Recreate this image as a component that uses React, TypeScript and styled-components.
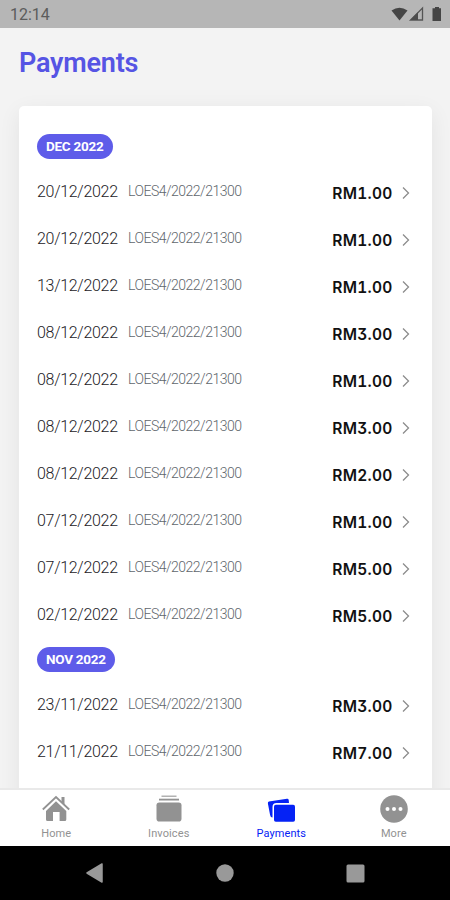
import React from "react";
import styled, { createGlobalStyle } from "styled-components";

const Global = createGlobalStyle`
  * { box-sizing: border-box; }
  body { margin: 0; font-family: Roboto, "Liberation Sans", sans-serif; }
`;

const Screen = styled.div`
  width: 450px;
  height: 900px;
  display: flex;
  flex-direction: column;
  overflow: hidden;
  background: #f3f3f3;
`;

const StatusBar = styled.header`
  flex: none;
  height: 28px;
  padding: 1px 7px 0 10px;
  display: flex;
  align-items: center;
  justify-content: space-between;
  background: #b6b6b6;
  color: #5c5c5c;
  font-size: 16px;
`;

const Content = styled.main`
  flex: 1;
  min-height: 0;
  display: flex;
  flex-direction: column;
  padding: 0 18px 0 19px;
  overflow: hidden;
`;

const Title = styled.h1`
  flex: none;
  margin: 0;
  height: 78px;
  padding-top: 19px;
  font-size: 27px;
  line-height: 32px;
  font-weight: 600;
  letter-spacing: -0.2px;
  color: #5654e4;
`;

const Card = styled.section`
  flex: none;
  height: 720px;
  padding: 19px 18px 0;
  background: #fff;
  border-radius: 5px 5px 0 0;
  box-shadow: 0 6px 22px rgba(0, 0, 0, 0.07);
`;

const MonthHead = styled.div`
  height: 43px;
  display: flex;
  align-items: center;
`;

const MonthBadge = styled.span`
  height: 25px;
  padding: 0 9px;
  border-radius: 13px;
  background: #5e5ce9;
  color: #fff;
  font-size: 13.5px;
  line-height: 25px;
  font-weight: 700;
  letter-spacing: -0.25px;
`;

const Row = styled.div`
  height: 47px;
  display: flex;
  align-items: center;
`;

const DateText = styled.span`
  width: 91px;
  font-size: 16px;
  font-weight: 300;
  letter-spacing: -0.3px;
  color: #1c2126;
`;

const Reference = styled.span`
  flex: 1;
  padding-bottom: 1px;
  font-size: 14px;
  font-weight: 300;
  letter-spacing: -0.5px;
  color: #60666c;
`;

const Amount = styled.span`
  padding-top: 3px;
  font-family: Inter, Roboto, sans-serif;
  font-size: 15.5px;
  font-weight: 600;
  font-feature-settings: "tnum", "cv09";
  letter-spacing: 0.25px;
  color: #111;
`;

const Chevron = styled.svg`
  flex: none;
  width: 8px;
  height: 14px;
  margin: 2px 4px 0 9.5px;
`;

const TabBar = styled.nav`
  flex: none;
  height: 58px;
  display: grid;
  grid-template-columns: repeat(4, 1fr);
  background: #fff;
  border-top: 2px solid #e9e9e9;
`;

const Tab = styled.div<{ $active?: boolean }>`
  display: flex;
  flex-direction: column;
  align-items: center;
  padding-top: 4px;
  font-size: 11px;
  line-height: 14px;
  letter-spacing: 0.1px;
  color: ${(p) => (p.$active ? "#0522f5" : "#929292")};

  svg {
    width: 30px;
    height: 30px;
    flex: none;
  }
`;

const TabLabel = styled.span`
  margin-top: 3px;
`;

const SystemBar = styled.footer`
  flex: none;
  height: 54px;
  display: grid;
  grid-template-columns: 130px 130px 130px;
  justify-content: center;
  justify-items: center;
  align-items: center;
  background: #000;
`;

const months = [
  {
    label: "DEC 2022",
    payments: [
      ["20/12/2022", "RM1.00"],
      ["20/12/2022", "RM1.00"],
      ["13/12/2022", "RM1.00"],
      ["08/12/2022", "RM3.00"],
      ["08/12/2022", "RM1.00"],
      ["08/12/2022", "RM3.00"],
      ["08/12/2022", "RM2.00"],
      ["07/12/2022", "RM1.00"],
      ["07/12/2022", "RM5.00"],
      ["02/12/2022", "RM5.00"],
    ],
  },
  {
    label: "NOV 2022",
    payments: [
      ["23/11/2022", "RM3.00"],
      ["21/11/2022", "RM7.00"],
    ],
  },
];

const StatusIcons = () => (
  <svg width="52" height="18" viewBox="0 0 52 18">
    <path d="M0.5 4.6Q8.500-1 16.500 4.600L8.500 14.600Z" fill="#454545" />
    <path d="M31.500 2V14H19.500Z" fill="none" stroke="#555" strokeWidth="1.300" />
    <path d="M27 6.300V14H19.300Z" fill="#4c4c4c" />
    <path d="M41.500 2.200H44V1H48V2.200H50V15H41.500V2.200Z" fill="#454545" />
  </svg>
);

const HomeIcon = () => (
  <svg viewBox="0 0 30 30" fill="currentColor">
    <path d="M1.800 15.500L15 3L28.200 15.500" fill="none" stroke="currentColor" strokeWidth="1.800" />
    <path d="M20.500 3H23.500V11L20.500 8.200Z" />
    <path d="M15 7.200L25.300 17V25.500Q25.300 27 23.800 27H18.600V18H12V27H6.500Q5 27 5 25.500V17Z" />
  </svg>
);

const InvoicesIcon = () => (
  <svg viewBox="0 0 30 30" fill="currentColor">
    <rect x="7.500" y="1.500" width="15" height="1.500" opacity="0.700" />
    <rect x="5" y="4.700" width="20" height="1.800" />
    <rect x="2.500" y="8.500" width="25" height="19" rx="2.800" />
  </svg>
);

const PaymentsIcon = () => (
  <svg viewBox="0 0 30 30" fill="currentColor">
    <path d="M2.900 7.500L21 4.800Q22.400 4.600 22.700 6L23 9H10.500Q6.500 9 6.500 13V23.500Q4.500 23.500 4.100 21L1.900 9.500Q1.600 7.800 2.900 7.500Z" />
    <rect x="8" y="10.800" width="21" height="17" rx="1.800" />
  </svg>
);

const MoreIcon = () => (
  <svg viewBox="0 0 30 30">
    <circle cx="15" cy="15" r="13.800" fill="currentColor" />
    <circle cx="8.500" cy="15" r="2" fill="#fff" />
    <circle cx="15" cy="15" r="2" fill="#fff" />
    <circle cx="21.500" cy="15" r="2" fill="#fff" />
  </svg>
);

const tabs = [
  { label: "Home", Icon: HomeIcon },
  { label: "Invoices", Icon: InvoicesIcon },
  { label: "Payments", Icon: PaymentsIcon, active: true },
  { label: "More", Icon: MoreIcon },
];

export default function App() {
  return (
    <Screen>
      <Global />
      <StatusBar>
        <span>12:14</span>
        <StatusIcons />
      </StatusBar>
      <Content>
        <Title>Payments</Title>
        <Card>
          {months.map((month) => (
            <React.Fragment key={month.label}>
              <MonthHead>
                <MonthBadge>{month.label}</MonthBadge>
              </MonthHead>
              {month.payments.map(([date, amount], i) => (
                <Row key={i}>
                  <DateText>{date}</DateText>
                  <Reference>LOES4/2022/21300</Reference>
                  <Amount>{amount}</Amount>
                  <Chevron viewBox="0 0 8 14">
                    <path d="M1 1.500L6.500 7L1 12.500" fill="none" stroke="#8c8c8c" strokeWidth="1.300" />
                  </Chevron>
                </Row>
              ))}
            </React.Fragment>
          ))}
        </Card>
      </Content>
      <TabBar>
        {tabs.map(({ label, Icon, active }) => (
          <Tab key={label} $active={active}>
            <Icon />
            <TabLabel>{label}</TabLabel>
          </Tab>
        ))}
      </TabBar>
      <SystemBar>
        <svg width="20" height="22" viewBox="0 0 20 22">
          <path d="M2 11L17 2V20Z" fill="#999" stroke="#999" strokeWidth="1.500" strokeLinejoin="round" />
        </svg>
        <svg width="18" height="18" viewBox="0 0 18 18">
          <circle cx="9" cy="9" r="8.700" fill="#999" />
        </svg>
        <svg width="19" height="19" viewBox="0 0 19 19">
          <rect x="0.500" y="0.500" width="18" height="18" rx="1.500" fill="#999" />
        </svg>
      </SystemBar>
    </Screen>
  );
}
